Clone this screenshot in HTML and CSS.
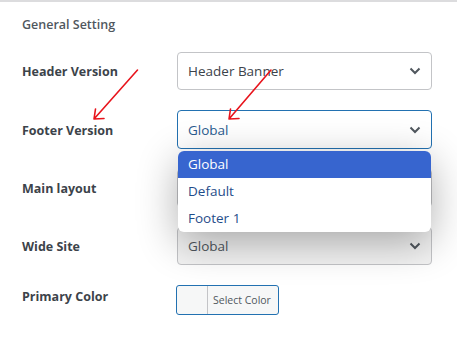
FILE: index.html
```html
<html>

<head>
    <meta charset="UTF-8" />
    <link rel="stylesheet" href="styles.css">
</head>

<body>
    <div id="painel">
        <h3 class="titulo">General Setting</h3>
        <div class="linhas">
            <div class="rotulo">Header Version</div>
            <div class="campo">
                <div class="select">Header Banner
                    <svg class="seta" width="12" height="8" viewBox="0 0 12 8"><path d="M1.5 1.5l4.5 4.5 4.5-4.5" /></svg>
                </div>
            </div>

            <div class="rotulo">Footer Version</div>
            <div class="campo">
                <div class="select aberto">Global
                    <svg class="seta" width="12" height="8" viewBox="0 0 12 8"><path d="M1.5 1.5l4.5 4.5 4.5-4.5" /></svg>
                </div>
                <ul class="lista">
                    <li class="marcado">Global</li>
                    <li>Default</li>
                    <li>Footer 1</li>
                </ul>
            </div>

            <div class="rotulo">Main layout</div>
            <div class="campo">
                <!-- coberto pela lista aberta -->
                <div class="select"></div>
            </div>

            <div class="rotulo">Wide Site</div>
            <div class="campo">
                <div class="select sombra">Global
                    <svg class="seta" width="12" height="8" viewBox="0 0 12 8"><path d="M1.5 1.5l4.5 4.5 4.5-4.5" /></svg>
                </div>
            </div>

            <div class="rotulo cor">Primary Color</div>
            <div class="campo">
                <button class="btn-cor"><span class="amostra"></span><span class="txt">Select Color</span></button>
            </div>
        </div>

        <!-- setas vermelhas de anotacao -->
        <svg class="setas" width="457" height="342" viewBox="0 0 457 342">
            <path d="M137.5 70L94 119M94 119L95.5 109M94 119L104 118.5" />
            <path d="M271 70L229 119M229 119L230.5 109M229 119L239 118.5" />
        </svg>
    </div>
</body>

</html>
```

FILE: styles.css
```css
body {
    margin: 0;
    background: #fff;
}

#painel {
    position: relative;
    font-family: 'Open Sans', sans-serif;
    border-top: 2px solid #dcdcde;
    width: 457px;
    height: 340px;
    padding: 13px 0 0 22px;
    box-sizing: border-box;
    overflow: hidden;
}

.titulo {
    margin: 0 0 17px 0;
    font-size: 12.5px;
    line-height: 20px;
    font-weight: 600;
    color: #50575e;
}

.linhas {
    display: grid;
    grid-template-columns: 155px 255px;
    row-gap: 20px;
    align-items: center;
}

.rotulo {
    font-size: 12.5px;
    font-weight: 700;
    color: #3c434a;
    line-height: 20px;
    padding-top: 2px;
}

.rotulo.cor {
    padding-top: 0;
    padding-bottom: 6px;
}

.campo {
    position: relative;
}

.select {
    display: flex;
    align-items: center;
    justify-content: space-between;
    height: 38px;
    box-sizing: border-box;
    border: 1px solid #c3c4c7;
    border-radius: 4px;
    padding: 0 10px 0 10px;
    font-size: 13.5px;
    color: #3c434a;
    background: #fff;
}

.select.aberto {
    border-color: #2271b1;
    color: #2a5b8f;
    height: 39px;
}

.select.sombra {
    background: #f3f3f3;
    color: #50575e;
}

.seta path {
    fill: none;
    stroke: #50575e;
    stroke-width: 2;
}

.lista {
    position: absolute;
    left: 1px;
    top: 41px;
    width: 253px;
    margin: 0;
    padding: 0;
    list-style: none;
    background: #fff;
    border-radius: 6px;
    overflow: hidden;
    box-shadow: 0 10px 40px rgba(0, 0, 0, 0.32);
    z-index: 2;
}

.lista li {
    height: 27px;
    line-height: 27px;
    padding-left: 10px;
    font-size: 13.5px;
    color: #1f4d8a;
}

.lista li.marcado {
    background: #3765cf;
    color: #fff;
}

.btn-cor {
    display: flex;
    align-items: stretch;
    width: 103px;
    height: 30px;
    padding: 0;
    margin-left: -1px;
    border: 1px solid #2271b1;
    border-radius: 3px;
    background: #f6f7f7;
    font-family: 'Open Sans', sans-serif;
}

.amostra {
    width: 30px;
    border-right: 1px solid #c3c4c7;
}

.txt {
    font-size: 10.5px;
    line-height: 28px;
    color: #50575e;
    padding-left: 5px;
}

.setas {
    position: absolute;
    left: 0;
    top: -2px;
    z-index: 3;
}

.setas path {
    fill: none;
    stroke: #e8141c;
    stroke-width: 1.6;
    stroke-linecap: round;
}
```
